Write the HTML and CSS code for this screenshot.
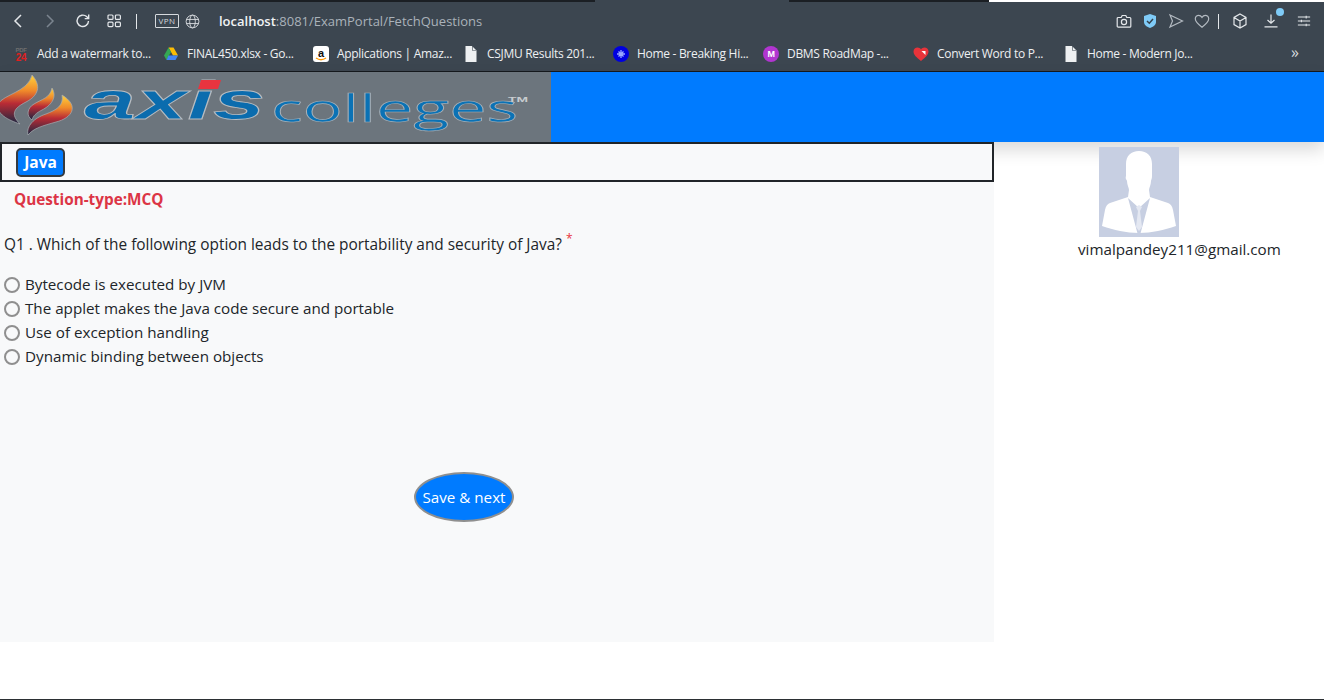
FILE: index.html
```html
<!DOCTYPE html>
<html lang="en">
<head>
<meta charset="utf-8">
<title>ExamPortal</title>
<link rel="stylesheet" href="styles.css">
</head>
<body>
<div class="tabstrip"><span class="seg seg-dark1"></span><span class="seg seg-chrome"></span><span class="seg seg-dark2"></span><span class="seg seg-white"></span></div>
<div class="toolbar">
  <svg class="ti ti-back" viewBox="0 0 14 16"><path d="M10 2 4 8l6 6"/></svg>
  <svg class="ti ti-fwd" viewBox="0 0 14 16"><path d="M4 2l6 6-6 6"/></svg>
  <svg class="ti ti-reload" viewBox="0 0 16 16"><path d="M13.5 8A5.7 5.7 0 1 1 11.6 3.6L13.5 5.4M13.7 1.6v4h-4"/></svg>
  <svg class="ti ti-grid" viewBox="0 0 14 14"><rect x="1" y="1" width="5" height="4.4" rx="1"/><rect x="8.4" y="1" width="5" height="4.4" rx="1"/><rect x="1" y="8.2" width="5" height="4.4" rx="1"/><rect x="8.4" y="8.2" width="5" height="4.4" rx="1"/></svg>
  <span class="vsep"></span>
  <span class="vpn">VPN</span>
  <svg class="ti ti-globe" viewBox="0 0 16 16"><circle cx="8" cy="8" r="6.8"/><ellipse cx="8" cy="8" rx="3" ry="6.8"/><path d="M1.5 5.8h13M1.5 10.2h13"/></svg>
  <span class="url"><b>localhost</b>:8081/ExamPortal/FetchQuestions</span>
  <span class="tools">
    <svg class="ti" viewBox="0 0 16 16"><path d="M2.2 4.5h3l1-2h3.6l1 2h3a1 1 0 0 1 1 1v7.7a1 1 0 0 1-1 1H2.2a1 1 0 0 1-1-1V5.500a1 1 0 0 1 1-1z"/><circle cx="8" cy="9" r="2.600"/></svg>
    <svg class="ti ti-shield" viewBox="0 0 16 16"><path class="fill-blue" d="M8 1l6 2v6c0 3-3 5-6 6-3-1-6-3-6-6V3z"/><path class="check" d="M5 8l2.300 2.200L11 6"/></svg>
    <svg class="ti dim" viewBox="0 0 16 16"><path d="M2 2l12.500 6L2 14l2.500-6z"/></svg>
    <svg class="ti dim" viewBox="0 0 16 16"><path d="M8 14.200C3.500 10.800 1.300 8.500 1.300 5.800 1.300 3.700 3 2.300 4.700 2.300c1.400 0 2.500.8 3.300 2 .8-1.200 1.900-2 3.300-2 1.700 0 3.400 1.400 3.400 3.500 0 2.700-2.200 5-6.700 8.400z"/></svg>
    <span class="vsep vsep-tools"></span>
    <svg class="ti ti-cube" viewBox="0 0 16 16"><path d="M8 1l6 3.400v7.200L8 15l-6-3.400V4.400zM2 4.400L8 8l6-3.600M8 8v7"/></svg>
    <span class="dl">
      <svg class="ti" viewBox="0 0 16 16"><path d="M8 1.500v8.500M4.500 7L8 10.300 11.500 7M1.500 13.800h13"/></svg>
      <span class="dot"></span>
    </span>
    <svg class="ti ti-set" viewBox="0 0 16 16"><path d="M1 3.500h14M1 8h14M1 12.500h14M10.500 2v3M5 6.500v3M10.500 11v3"/></svg>
  </span>
</div>
<div class="bookmarks">
  <a class="bm"><svg class="bi" viewBox="0 0 16 16"><text class="pdf-a" x="8" y="6" text-anchor="middle">PDF</text><text class="pdf-b" x="8" y="15" text-anchor="middle">24</text></svg>Add a watermark to...</a>
  <a class="bm"><svg class="bi" viewBox="0 0 16 16"><path fill="#fbbc04" d="M5.500 1.500h5L15 9.500h-5z"/><path fill="#34a853" d="M5.500 1.500L1 9.500l2.500 4.500L8 6z"/><path fill="#4285f4" d="M5.500 9.500H15l-2.500 4.500h-9z"/></svg>FINAL450.xlsx - Go...</a>
  <a class="bm"><svg class="bi" viewBox="0 0 16 16"><rect width="16" height="16" rx="3" fill="#fff"/><text class="amz" x="8" y="10.500" text-anchor="middle">a</text><path d="M3 12c3 2 7 2 10 0" fill="none" stroke="#f90" stroke-width="1.400"/></svg>Applications | Amaz...</a>
  <a class="bm"><svg class="bi" viewBox="0 0 16 16"><path class="doc" d="M2.500 0H9l4.500 4.500V16h-11z"/><path fill="#3c4650" d="M9 0v4.500h4.500v-.6H9.600V0z"/></svg>CSJMU Results 201...</a>
  <a class="bm"><svg class="bi" viewBox="0 0 16 16"><circle cx="8" cy="8" r="8" fill="#0000e0"/><path d="M8 4v8M4 8h8M5.500 5.500l5 5M10.500 5.500l-5 5" stroke="#9aa8ff" stroke-width="1.300"/></svg>Home - Breaking Hi...</a>
  <a class="bm"><svg class="bi" viewBox="0 0 16 16"><circle cx="8" cy="8" r="8" fill="#b135d0"/><text class="mono" x="8" y="11" text-anchor="middle">M</text></svg>DBMS RoadMap -...</a>
  <a class="bm"><svg class="bi" viewBox="0 0 16 16"><path fill="#e8333a" d="M8 15C3 11 .500 8.500.500 5.500.500 3 2.500 1.500 4.500 1.500c1.500 0 2.700.7 3.500 1.900.8-1.200 2-1.900 3.500-1.900 2 0 4 1.500 4 4C15.500 8.500 13 11 8 15z"/><path fill="#fff" d="M8.500 5h4v4z"/></svg>Convert Word to P...</a>
  <a class="bm"><svg class="bi" viewBox="0 0 16 16"><path class="doc" d="M2.500 0H9l4.500 4.500V16h-11z"/><path fill="#3c4650" d="M9 0v4.500h4.500v-.6H9.600V0z"/></svg>Home - Modern Jo...</a>
  <span class="more">»</span>
</div>
<header class="site-header">
  <div class="logo">
    <svg class="logo-svg" viewBox="0 0 551 70">
      <defs>
        <linearGradient id="flame" x1="0" y1="0" x2="0" y2="1">
          <stop offset="0" stop-color="#ffd23c"/><stop offset=".32" stop-color="#f08a2a"/><stop offset=".58" stop-color="#b92b35"/><stop offset=".95" stop-color="#2c2740"/>
        </linearGradient>
      </defs>
      <g class="flames">
        <path d="M32 3C42 14 38 24 26 30 14 36 10 42 20 52 8 48-4 42-2 32 4 22 28 20 32 3z"/>
        <path d="M52 16C58 26 50 34 42 38 36 41 33 44 32 48 26 44 27 36 34 32 42 27 50 26 52 16z"/>
        <path d="M62 23C80 34 72 46 56 50 42 54 34 56 28 63 26 54 34 46 46 42 56 38 64 34 62 23z"/>
      </g>
      <text class="axis" x="84" y="47" textLength="181" lengthAdjust="spacingAndGlyphs">axis</text>
      <path class="idot" d="M201 8h20l-3 9h-20z"/>
      <text class="colleges" x="271" y="50" textLength="247" lengthAdjust="spacingAndGlyphs">colleges</text>
      <text class="tm" x="508" y="30" textLength="20" lengthAdjust="spacingAndGlyphs">TM</text>
    </svg>
  </div>
</header>
<div class="content">
  <main class="exam">
    <div class="subject-bar"><button class="subject-btn">Java</button></div>
    <h2 class="qtype">Question-type:MCQ</h2>
    <p class="question">Q1 . Which of the following option leads to the portability and security of Java?<sup class="req">*</sup></p>
    <div class="options">
      <label class="opt"><input type="radio" name="q1" class="radio"><span>Bytecode is executed by JVM</span></label>
      <label class="opt"><input type="radio" name="q1" class="radio"><span>The applet makes the Java code secure and portable</span></label>
      <label class="opt"><input type="radio" name="q1" class="radio"><span>Use of exception handling</span></label>
      <label class="opt"><input type="radio" name="q1" class="radio"><span>Dynamic binding between objects</span></label>
    </div>
    <div class="actions"><button class="save">Save &amp; next</button></div>
  </main>
  <aside class="profile">
    <svg class="avatar" viewBox="0 0 80 90">
      <rect width="80" height="90" fill="#c7cfe2"/>
      <path fill="#fff" d="M40 4c8 0 13 5 13 13v12c0 3-1 4-1 5 0 4-2 7-2 9l1 7 18 6c3 1 4 3 5 7l3 16c-12 4-24 7-37 7S15 83 3 79l3-16c1-4 2-6 5-7l18-6 1-7c0-2-2-5-2-9 0-1-2-2-1-5V17c0-8 5-13 13-13z"/>
      <path fill="#c7cfe2" d="M29 51l11 41 11-41-11 10z"/>
      <path fill="#e4e8f2" d="M37 60l3-2 3 2-2 4 2 16-3 4-3-4 2-16z"/>
    </svg>
    <div class="email">vimalpandey211@gmail.com</div>
  </aside>
</div>
<div class="bottom-line"></div>
</body>
</html>
```
FILE: styles.css
```css
* { box-sizing: border-box; }
html, body { margin: 0; height: 100%; }
body {
  display: flex;
  flex-direction: column;
  height: 700px;
  overflow: hidden;
  background: #fff;
  font-family: "Open Sans", "Noto Sans", sans-serif;
  color: #212529;
}
.tabstrip { display: flex; height: 2px; flex: none; }
.seg { display: block; height: 2px; }
.seg-dark1 { width: 595px; background: #1b1f24; }
.seg-chrome { width: 194px; background: #3c4650; }
.seg-dark2 { width: 200px; background: #1b1f24; }
.seg-white { flex: 1; background: #fff; }

.toolbar {
  display: flex;
  align-items: center;
  height: 38px;
  flex: none;
  padding-left: 11px;
  background: #3c4650;
  color: #fff;
}
.ti {
  flex: none;
  width: 16px;
  height: 16px;
  fill: none;
  stroke: #e4e7ea;
  stroke-width: 1.2;
}
.ti-back { width: 14px; margin-right: 18px; stroke-width: 1.5; }
.ti-fwd { width: 14px; margin-right: 18px; stroke: #7b858f; stroke-width: 1.5; }
.ti-reload { margin-right: 16px; stroke-width: 1.4; }
.ti-grid { width: 14px; height: 14px; margin-right: 15px; }
.vsep { width: 1px; height: 15px; background: #e4e7ea; flex: none; margin-right: 18px; }
.vpn {
  width: 24px;
  height: 14px;
  border: 1px solid #d5d9dd;
  border-radius: 1px;
  font-size: 8px;
  line-height: 12px;
  letter-spacing: .5px;
  text-align: center;
  margin-right: 6px;
  color: #d5d9dd;
  flex: none;
}
.ti-globe { width: 15px; height: 15px; margin-right: 19px; stroke-width: 1; stroke: #d5d9dd; }
.url { font-size: 13px; color: #aab2ba; white-space: nowrap; }
.url b { color: #f1f3f4; font-weight: 600; }
.tools {
  margin-left: auto;
  display: flex;
  align-items: center;
  gap: 10px;
  padding-right: 13px;
}
.tools .dim { stroke: #b3bac1; }
.fill-blue { fill: #7fcbf7; stroke: none; }
.check { stroke: #33404c; stroke-width: 1.5; }
.vsep-tools { margin: 0 3px 0 -2px; }
.ti-cube { margin-right: 5px; }
.dl { position: relative; display: flex; margin-right: 8px; }
.dot {
  position: absolute;
  top: -5px;
  right: -5px;
  width: 8px;
  height: 8px;
  border-radius: 50%;
  background: #7fcbf7;
}
.ti-set { width: 14px; height: 14px; }

.bookmarks {
  display: grid;
  grid-template-columns: repeat(8, 150px) 1fr;
  align-items: center;
  height: 32px;
  flex: none;
  padding-left: 13px;
  padding-bottom: 4px;
  background: #3c4650;
  border-bottom: 1px solid #15191d;
}
.bm {
  display: flex;
  align-items: center;
  gap: 8px;
  font-size: 12px;
  letter-spacing: -.3px;
  color: #eef0f2;
  white-space: nowrap;
}
.bi { width: 16px; height: 16px; flex: none; }
.pdf-a { font: 700 6px "Liberation Sans", sans-serif; fill: #6e6e6e; }
.pdf-b { font: 700 10px "Liberation Sans", sans-serif; fill: #e02020; }
.amz { font: 700 11px "Liberation Sans", sans-serif; fill: #111; }
.mono { font: 700 9px "Liberation Sans", sans-serif; fill: #fff; }
.doc { fill: #eef0f2; }
.more { font-size: 16px; color: #d5d9dd; justify-self: end; padding: 0 25px 3px 0; line-height: 16px; }

.site-header {
  height: 70px;
  flex: none;
  background: #007bff;
  box-shadow: 0 8px 16px rgba(0, 0, 0, .15);
}
.logo { width: 551px; height: 70px; background: #6c757d; overflow: hidden; }
.logo-svg { display: block; width: 551px; height: 70px; }
.flames path { fill: url(#flame); stroke: #a9adb2; stroke-width: .7; }
.axis {
  font: italic 700 54px "Liberation Sans", sans-serif;
  fill: #0b6cae;
  stroke: #b7bcc1;
  stroke-width: .8;
}
.idot { fill: #e8343f; }
.colleges {
  font: 400 38px "Open Sans", sans-serif;
  fill: #0b72b5;
  stroke: #aab1b7;
  stroke-width: .6;
}
.tm { font: 700 7px "Liberation Sans", sans-serif; fill: #c8ccd0; }

.content { display: flex; height: 500px; flex: none; }
.exam {
  width: 994px;
  flex: none;
  background: #f8f9fa;
  display: flex;
  flex-direction: column;
}
.subject-bar {
  height: 40px;
  flex: none;
  border: 2px solid #212529;
  padding: 4px 14px;
  display: flex;
  align-items: flex-start;
}
.subject-btn {
  height: 29px;
  width: 49px;
  padding: 0 0 2px;
  border: 2px solid #343a40;
  border-radius: 5px;
  background: #007bff;
  color: #fff;
  font: 700 15.500px "Open Sans", sans-serif;
}
.qtype {
  margin: 6px 0 0 14px;
  font-size: 15.300px;
  line-height: 22px;
  font-weight: 700;
  color: #dc3545;
}
.question {
  margin: 23px 0 0 4px;
  font-size: 15.400px;
  line-height: 24px;
  white-space: nowrap;
}
.req { color: #e8333a; font-size: 12px; line-height: 0; margin-left: 4px; vertical-align: 7px; }
.options { margin: 15px 0 0 4px; display: flex; flex-direction: column; }
.opt { display: flex; align-items: center; height: 24px; font-size: 15.200px; white-space: nowrap; }
.radio {
  appearance: none;
  width: 16px;
  height: 16px;
  margin: 2px 5px 0 0;
  border: 2px solid #8f8f8f;
  border-radius: 50%;
  background: #f8f9fa;
  flex: none;
}
.actions { margin: 104px 0 0 414px; }
.save {
  width: 100px;
  height: 50px;
  padding: 0;
  border: 2px solid #8f8f8f;
  border-radius: 50%;
  background: #007bff;
  color: #fff;
  font: 400 15.200px "Open Sans", sans-serif;
}
.profile { flex: 1; padding: 5px 0 0 84px; }
.avatar { display: block; width: 80px; height: 90px; margin-left: 21px; }
.email { margin-top: 0; font-size: 15.200px; line-height: 24px; white-space: nowrap; }
.bottom-line { margin-top: auto; height: 1px; background: #2b2f33; flex: none; }
```
